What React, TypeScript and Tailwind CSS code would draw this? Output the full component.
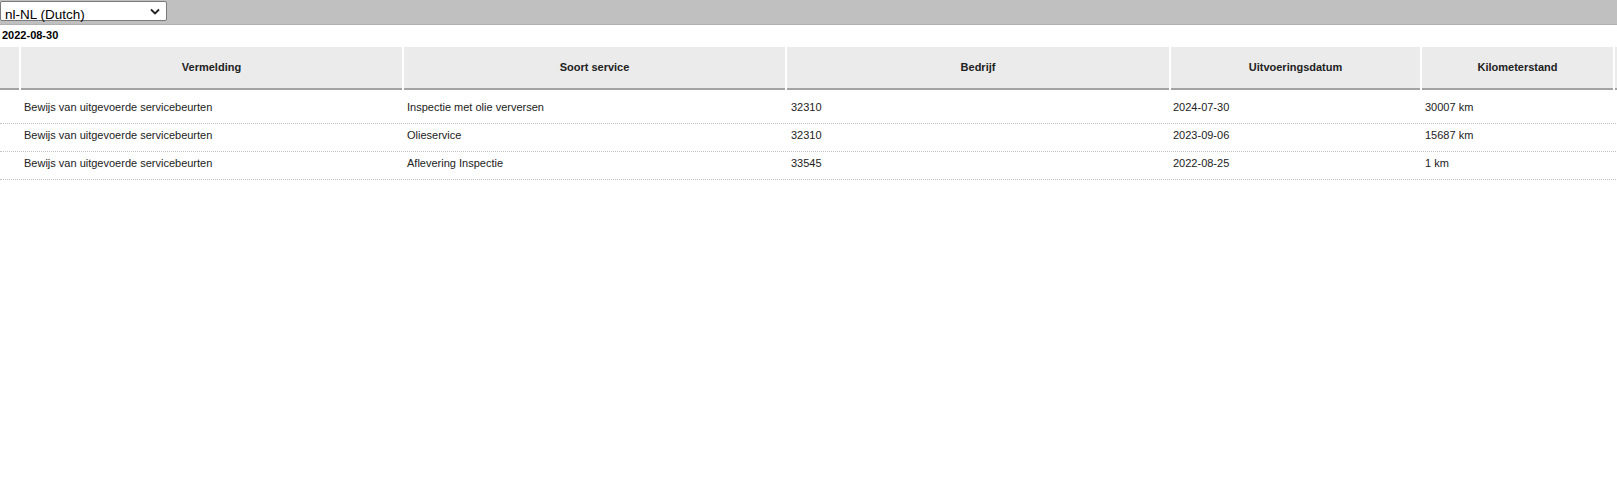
import React from "react";

type Row = {
  vermelding: string;
  soort: string;
  bedrijf: string;
  datum: string;
  km: string;
};

const ROWS: Row[] = [
  {
    vermelding: "Bewijs van uitgevoerde servicebeurten",
    soort: "Inspectie met olie verversen",
    bedrijf: "32310",
    datum: "2024-07-30",
    km: "30007 km"
  },
  {
    vermelding: "Bewijs van uitgevoerde servicebeurten",
    soort: "Olieservice",
    bedrijf: "32310",
    datum: "2023-09-06",
    km: "15687 km"
  },
  {
    vermelding: "Bewijs van uitgevoerde servicebeurten",
    soort: "Aflevering Inspectie",
    bedrijf: "33545",
    datum: "2022-08-25",
    km: "1 km"
  }
];

const COLS = "grid grid-cols-[19px_381px_381px_382px_249px_191px_200px] gap-x-[2px]";

const HEADERS = ["", "Vermelding", "Soort service", "Bedrijf", "Uitvoeringsdatum", "Kilometerstand", ""];

export default function App() {
  return (
    <div className="min-h-[480px] w-full overflow-hidden bg-white font-['Liberation_Sans',Arial,sans-serif] text-[#222]">
      {/* language bar */}
      <div className="h-[25px] bg-[#c0c0c0] border-b border-[#b0b0b0] pt-px">
        <div className="relative w-[167px] h-[20px] bg-white border border-[#7a7a7a] rounded-[2px]">
          <select
            defaultValue="nl-NL"
            className="appearance-none w-full h-full pl-[4px] pr-6 text-[13.5px] leading-[18px] text-black outline-none"
          >
            <option value="nl-NL">nl-NL (Dutch)</option>
            <option value="en-GB">en-GB (English)</option>
          </select>
          <svg
            className="pointer-events-none absolute right-[6px] top-[6px]"
            width="10"
            height="7"
            viewBox="0 0 10 7"
          >
            <path d="M1 1.5 L5 5.5 L9 1.5" fill="none" stroke="#222" strokeWidth="1.8" />
          </svg>
        </div>
      </div>

      <div className="h-[22px] pt-[4px] pl-[2px] text-[11px] leading-[13px] font-bold text-black">2022-08-30</div>

      <div className="w-[1800px]">
        <div className={COLS}>
          {HEADERS.map((h, i) => (
            <div
              key={i}
              className="h-[43px] bg-[#ebebeb] border-b-2 border-[#a3a3a3] flex items-center justify-center text-[11px] font-bold text-[#222]"
            >
              {h}
            </div>
          ))}
        </div>

        <div className="mt-[6px]">
          {ROWS.map((r, i) => (
            <div key={i} className={`${COLS} h-[28px] border-b border-dotted border-[#c4c4c4]`}>
              <div />
              <div className="pl-[3px] pt-[5px] text-[11px] leading-[13px]">{r.vermelding}</div>
              <div className="pl-[3px] pt-[5px] text-[11px] leading-[13px]">{r.soort}</div>
              <div className="pl-[4px] pt-[5px] text-[11px] leading-[13px]">{r.bedrijf}</div>
              <div className="pl-[2px] pt-[5px] text-[11px] leading-[13px]">{r.datum}</div>
              <div className="pl-[3px] pt-[5px] text-[11px] leading-[13px]">{r.km}</div>
              <div />
            </div>
          ))}
        </div>
      </div>
    </div>
  );
}
